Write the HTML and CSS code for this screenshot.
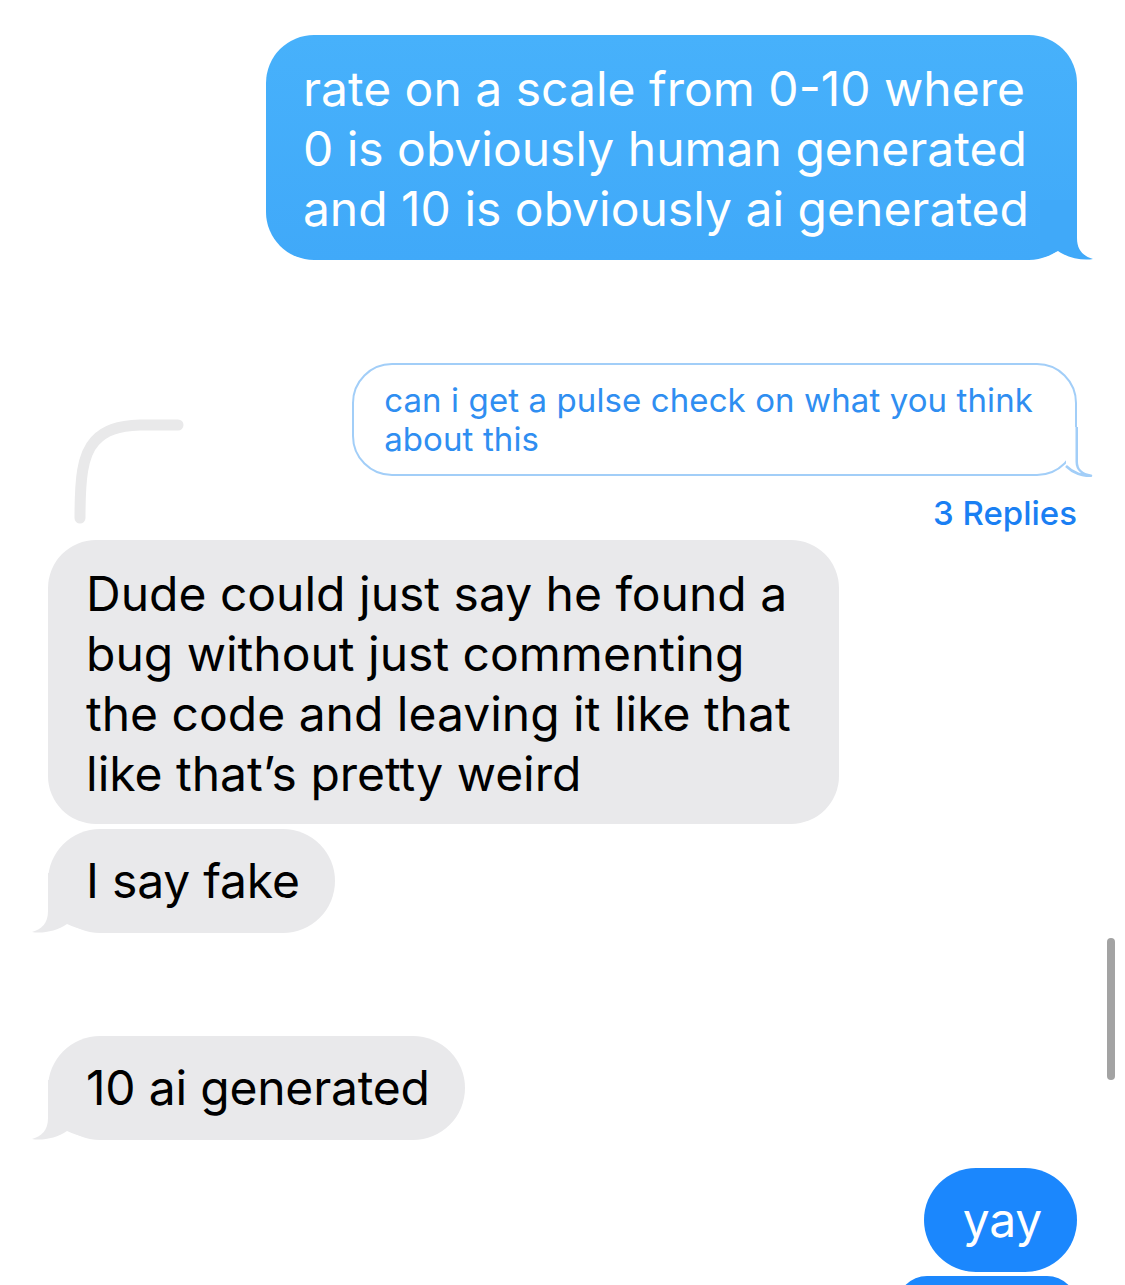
FILE: index.html
```html
<!DOCTYPE html>
<html lang="en">
<head>
<meta charset="utf-8">
<title>Messages</title>
<link rel="stylesheet" href="styles.css">
</head>
<body>
<div class="chat">
  <svg class="thread-line" width="120" height="115" viewBox="0 0 120 115" aria-hidden="true">
    <path d="M10 103 C10 65 12 40 25 26 C35 15 48 11 70 10 L108 10" fill="none" stroke="#e9e9ea" stroke-width="11" stroke-linecap="round"/>
  </svg>

  <div class="row out">
    <div class="bubble sent multi">rate on a scale from 0-10 where<br>0 is obviously human generated<br>and 10 is obviously ai generated<svg class="tail tail-r" width="54" height="60" viewBox="0 0 54 60" aria-hidden="true"><path d="M37 0 L37 38 C37 50 43 56 53 59 C43 61 28 58 18 51 C12 54 5 56 0 57 L0 0 Z" fill="#40a9f9"/></svg></div>
  </div>

  <div class="row out reply-src">
    <div class="bubble outline">can i get a pulse check on what you think<br>about this<svg class="tail tail-o" width="40" height="50" viewBox="0 0 40 50" aria-hidden="true"><path d="M22.75 0 L22.75 35 C22.75 43 29 47.5 37 48.75 C29 49.5 19 46 12 39 L12 0 Z" fill="#fff"/><path d="M22.75 0 L22.75 35 C22.75 43 29 47.5 37 48.75 C29 49.5 19 46 12 39" fill="none" stroke="#a2cef8" stroke-width="2.5" stroke-linejoin="round"/></svg></div>
  </div>

  <div class="row out replies-row">
    <span class="replies">3 Replies</span>
  </div>

  <div class="row in">
    <div class="bubble recv multi">Dude could just say he found a<br>bug without just commenting<br>the code and leaving it like that<br>like that’s pretty weird</div>
  </div>

  <div class="row in stacked">
    <div class="bubble recv">I say fake<svg class="tail tail-l" width="54" height="60" viewBox="0 0 54 60" aria-hidden="true"><path d="M37 0 L37 38 C37 50 43 56 53 59 C43 61 28 58 18 51 C12 54 5 56 0 57 L0 0 Z" fill="#e9e9eb"/></svg></div>
  </div>

  <div class="row in spaced">
    <div class="bubble recv">10 ai generated<svg class="tail tail-l" width="54" height="60" viewBox="0 0 54 60" aria-hidden="true"><path d="M37 0 L37 38 C37 50 43 56 53 59 C43 61 28 58 18 51 C12 54 5 56 0 57 L0 0 Z" fill="#e9e9eb"/></svg></div>
  </div>

  <div class="row out yay-row">
    <div class="bubble me">yay</div>
  </div>

  <div class="row out next-row">
    <div class="bubble me next" aria-hidden="true"></div>
  </div>

  <div class="scrollbar"></div>
</div>
</body>
</html>
```

FILE: styles.css
```css
html, body {
  margin: 0;
  padding: 0;
  background: #ffffff;
}

body {
  width: 1125px;
  height: 1285px;
  overflow: hidden;
  font-family: "Inter", "Noto Sans", "Liberation Sans", sans-serif;
}

.chat {
  position: relative;
  display: flex;
  flex-direction: column;
  padding: 35px 48px 0 48px;
}

.row {
  display: flex;
}

.row.out {
  justify-content: flex-end;
}

.row.in {
  justify-content: flex-start;
}

.bubble {
  position: relative;
  font-size: 48px;
  line-height: 60px;
  letter-spacing: -0.2px;
  padding: 22px 35px 22px 38px;
  border-radius: 52px;
  white-space: nowrap;
}

.bubble.multi {
  padding-top: 24px;
  padding-bottom: 20px;
  padding-right: 48px;
  border-radius: 48px;
  letter-spacing: 0;
}

.sent {
  color: #ffffff;
  background: linear-gradient(#47b1fb, #40a9f9);
  padding-left: 37px;
}

.sent.multi {
  padding-bottom: 21px;
}

.recv {
  color: #000000;
  background: #e9e9eb;
}

.me {
  color: #ffffff;
  background: #1b87fd;
  padding-left: 39px;
}

.tail {
  position: absolute;
  bottom: 0;
  display: block;
}

.tail-r {
  right: -17px;
}

.tail-l {
  left: -17px;
  transform: scaleX(-1);
}

.reply-src {
  margin-top: 103px;
}

.outline {
  font-size: 33px;
  line-height: 39px;
  letter-spacing: 0.1px;
  color: #2f8ef1;
  background: #ffffff;
  border: 2.5px solid #a2cef8;
  border-radius: 40px;
  padding: 16px 42px 15px 30px;
}

.tail-o {
  right: -18.5px;
  bottom: -2.5px;
}

.replies-row {
  height: 64px;
  align-items: flex-start;
}

.replies {
  margin-top: 17px;
  font-size: 33px;
  line-height: 40px;
  font-weight: 500;
  color: #1a7ff3;
  letter-spacing: 0;
}

.stacked {
  margin-top: 5px;
}

.spaced {
  margin-top: 103px;
}

.yay-row {
  margin-top: 28px;
}

.next-row {
  margin-top: 4px;
}

.next {
  width: 180px;
  height: 60px;
  padding: 0;
  box-sizing: border-box;
}

.thread-line {
  position: absolute;
  left: 70px;
  top: 415px;
}

.scrollbar {
  position: absolute;
  left: 1107px;
  top: 938px;
  width: 8px;
  height: 142px;
  border-radius: 4px;
  background: #a3a3a3;
}
```
